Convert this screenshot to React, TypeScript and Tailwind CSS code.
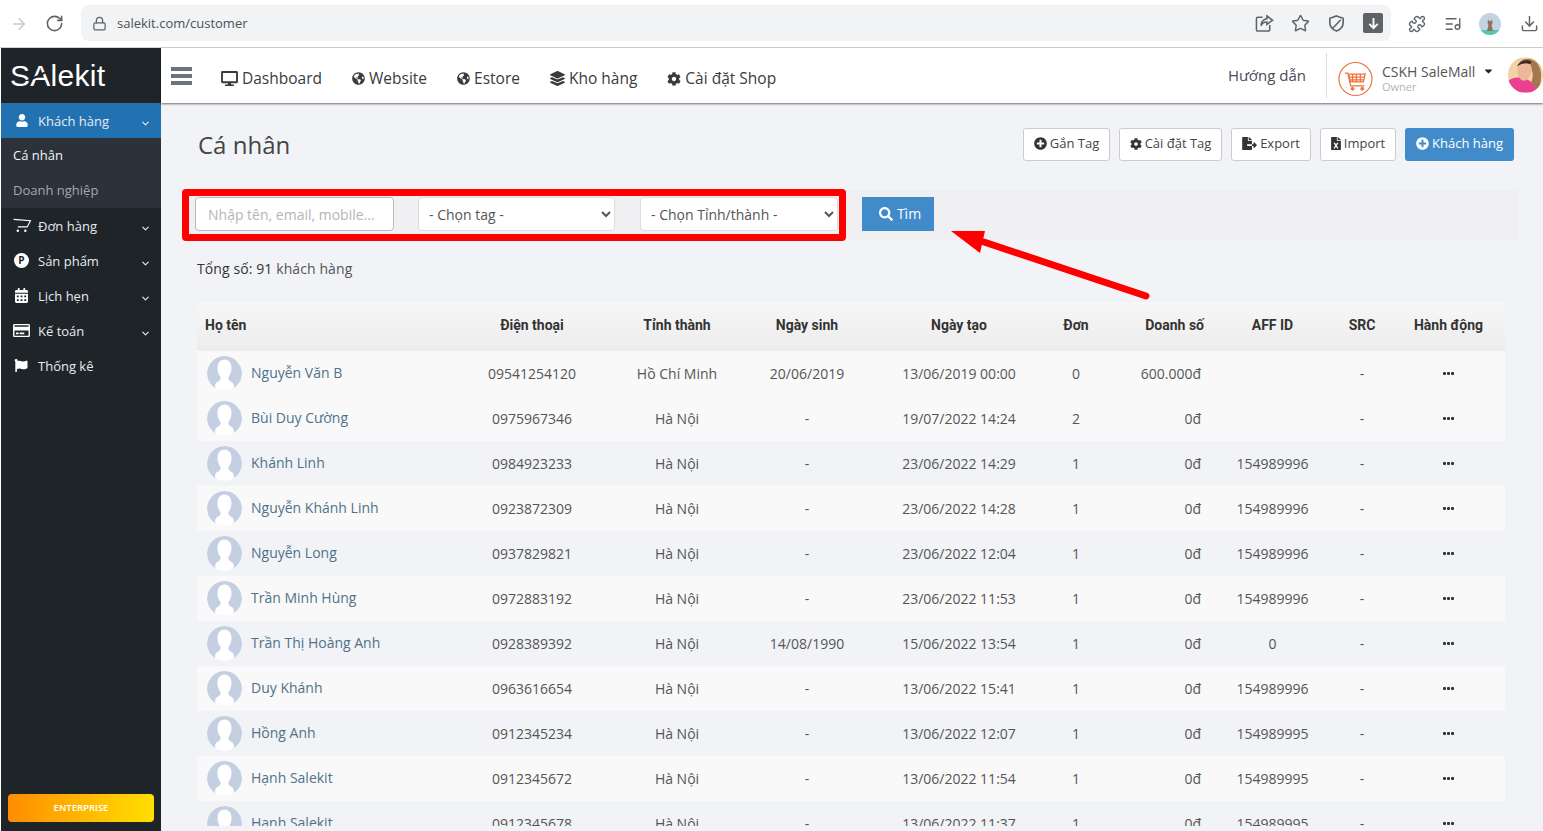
import { ArrowRight, ChevronDown, Download, ListMusic, Lock, Puzzle, RotateCw, Star } from "lucide-react";
import {
  FaCalendarAlt,
  FaCaretDown,
  FaCog,
  FaDesktop,
  FaFileExcel,
  FaFileExport,
  FaFlag,
  FaGlobeAmericas,
  FaLayerGroup,
  FaPlusCircle,
  FaRegCreditCard,
  FaSearch,
  FaUser,
} from "react-icons/fa";

const rows = [
  ["Nguyễn Văn B", "09541254120", "Hồ Chí Minh", "20/06/2019", "13/06/2019 00:00", "0", "600.000đ", ""],
  ["Bùi Duy Cường", "0975967346", "Hà Nội", "-", "19/07/2022 14:24", "2", "0đ", ""],
  ["Khánh Linh", "0984923233", "Hà Nội", "-", "23/06/2022 14:29", "1", "0đ", "154989996"],
  ["Nguyễn Khánh Linh", "0923872309", "Hà Nội", "-", "23/06/2022 14:28", "1", "0đ", "154989996"],
  ["Nguyễn Long", "0937829821", "Hà Nội", "-", "23/06/2022 12:04", "1", "0đ", "154989996"],
  ["Trần Minh Hùng", "0972883192", "Hà Nội", "-", "23/06/2022 11:53", "1", "0đ", "154989996"],
  ["Trần Thị Hoàng Anh", "0928389392", "Hà Nội", "14/08/1990", "15/06/2022 13:54", "1", "0đ", "0"],
  ["Duy Khánh", "0963616654", "Hà Nội", "-", "13/06/2022 15:41", "1", "0đ", "154989996"],
  ["Hồng Anh", "0912345234", "Hà Nội", "-", "13/06/2022 12:07", "1", "0đ", "154989995"],
  ["Hạnh Salekit", "0912345672", "Hà Nội", "-", "13/06/2022 11:54", "1", "0đ", "154989995"],
  ["Hạnh Salekit", "0912345678", "Hà Nội", "-", "13/06/2022 11:37", "1", "0đ", "154989995"],
];

const colClass = "grid grid-cols-[265px_140px_150px_110px_194px_40px_117px_119px_60px_113px] items-center";

function CartLine() {
  return (
    <svg viewBox="0 0 20 16" className="w-[19px] h-[15px]" fill="none" stroke="#fff">
      <path d="M0.5 1.5 L18.5 3 L15 9.5 H5" strokeWidth="1.2" />
      <circle cx="5" cy="13.5" r="1.3" fill="#fff" stroke="none" />
      <circle cx="13" cy="13.5" r="1.3" fill="#fff" stroke="none" />
    </svg>
  );
}

function Avatar() {
  return (
    <svg viewBox="0 0 35 35" className="w-[35px] h-[35px] shrink-0 rounded-full">
      <circle cx="17.5" cy="17.5" r="17.5" fill="#c5cfe2" />
      <path
        d="M17.5 3.5c-4.6 0-7 3.6-7 8.4 0 3.6 1.2 7 3 9 .5 2-.4 3.6-2.2 4.6-1.4.8-2.6 1.6-3.1 3.2-.3 1 .2 3 .6 6.8h17.4c.4-3.8.9-5.8.6-6.8-.5-1.6-1.7-2.4-3.1-3.2-1.8-1-2.7-2.6-2.2-4.6 1.8-2 3-5.4 3-9 0-4.8-2.4-8.4-7-8.4z"
        fill="#fff"
      />
    </svg>
  );
}

function SideItem({ icon, label, arrow = true }: { icon: React.ReactNode; label: string; arrow?: boolean }) {
  return (
    <div className="h-[35px] flex items-center text-[13px] text-[#e8ebee]">
      <span className="w-[37px] pl-[12px] flex items-center shrink-0">{icon}</span>
      <span className="flex-1 pt-[2px]">{label}</span>
      {arrow && <ChevronDown className="w-[11px] h-[11px] mr-[10px] mt-[6px]" strokeWidth={2.5} />}
    </div>
  );
}

function NavItem({ icon, label }: { icon: React.ReactNode; label: string }) {
  return (
    <div className="flex items-center gap-[4px] text-[15.5px] font-medium text-[#3b3b3b]">
      {icon}
      <span>{label}</span>
    </div>
  );
}

function ActionBtn({ icon, label, width }: { icon: React.ReactNode; label: string; width: string }) {
  return (
    <button className={`${width} h-[33px] pb-[2px] flex items-center justify-center gap-[3px] bg-white border border-[#ccc] rounded-[3px] text-[13px] text-[#444]`}>
      {icon}
      {label}
    </button>
  );
}

export default function App() {
  return (
    <div className="w-[1543px] h-[831px] overflow-hidden flex flex-col bg-white font-['Open_Sans',sans-serif]">
      {/* browser bar */}
      <div className="h-[48px] shrink-0 flex items-center border-b border-[#d4d4d4] bg-white">
        <ArrowRight className="w-[18px] h-[18px] ml-[10px] text-[#c4c7cb]" strokeWidth={2} />
        <RotateCw className="w-[19px] h-[19px] ml-[17px] text-[#5f6368]" strokeWidth={2} />
        <div className="ml-[17px] w-[1310px] h-[36px] -mt-[1px] rounded-lg bg-[#f1f3f4] flex items-center pl-[11px] pr-[8px]">
          <Lock className="w-[15px] h-[15px] text-[#5f6368]" strokeWidth={2} />
          <span className="ml-[10px] pt-[2px] text-[13px] text-[#4d5156]">salekit.com/customer</span>
          <div className="ml-auto flex items-center gap-[17px] text-[#5f6368]">
            <svg viewBox="0 0 20 20" className="w-[19px] h-[19px]" fill="none" stroke="currentColor" strokeWidth="1.6">
              <path d="M15.5 11.5v5a1.5 1.5 0 0 1-1.5 1.5H3a1.5 1.5 0 0 1-1.500-1.500V5A1.5 1.5 0 0 1 3 3.500h5" />
              <path d="M12.500 2l6 4.500-6 4.500V8.500c-3 0-5 1-6 4 0-4.500 2.500-7 6-7.500z" />
            </svg>
            <Star className="w-[19px] h-[19px]" strokeWidth={1.8} />
            <svg viewBox="0 0 20 20" className="w-[19px] h-[19px]" fill="none" stroke="currentColor" strokeWidth="1.7">
              <path d="M10 2l7 2.500v5c0 4-3 7-7 8.500-4-1.500-7-4.500-7-8.500v-5z" />
              <path d="M14.500 6L6 15" />
            </svg>
            <span className="w-[20px] h-[20px] rounded-[2px] bg-[#5f6368] flex items-center justify-center">
              <svg viewBox="0 0 14 14" className="w-[13px] h-[13px]" fill="none" stroke="#fff" strokeWidth="2">
                <path d="M7 1v11M2.500 7.500L7 12l4.500-4.500" />
              </svg>
            </span>
          </div>
        </div>
        <div className="ml-[17px] flex items-center text-[#5f6368]">
          <Puzzle className="w-[18px] h-[18px]" strokeWidth={1.8} />
          <ListMusic className="w-[18px] h-[18px] ml-[18px]" strokeWidth={1.8} />
          <svg viewBox="0 0 22 22" className="w-[22px] h-[22px] ml-[17px] rounded-full">
            <rect width="22" height="22" fill="#c3d3e4" />
            <rect y="17" width="22" height="5" fill="#52c9b0" />
            <path d="M9 6l1 2h2l1-2 .5 4-1 2 1.500 6H8l1.500-6-1-2z" fill="#8d7358" />
          </svg>
          <Download className="w-[19px] h-[19px] ml-[19px]" strokeWidth={1.8} />
        </div>
      </div>

      <div className="flex-1 flex min-h-0">
        {/* sidebar */}
        <aside className="ml-px w-[160px] shrink-0 bg-[#1f2429] flex flex-col">
          <div className="h-[55px] pl-[9px] flex items-center">
            <div className="relative font-['Liberation_Sans',sans-serif] text-[30px] text-white leading-none tracking-[0.3px]">
              SAlekit
              <svg viewBox="0 0 30 14" className="absolute left-[14px] top-[6px] w-[30px] h-[14px]">
                <path d="M0 14 C8 11 18 6 30 0 C20 8 12 12 4 14z" fill="#1f2429" />
              </svg>
            </div>
          </div>
          <div className="h-[35px] bg-[#2271b1]">
            <SideItem icon={<FaUser className="w-[12px] h-[13px] ml-[3px] text-white" />} label="Khách hàng" />
          </div>
          <div className="bg-[#2b323a] text-[13px]">
            <div className="h-[35px] pl-[12px] flex items-center text-[#f2f4f5]">Cá nhân</div>
            <div className="h-[35px] pl-[12px] flex items-center text-[#a1a9b0]">Doanh nghiệp</div>
          </div>
          <SideItem icon={<CartLine />} label="Đơn hàng" />
          <SideItem
            icon={
              <span className="ml-[1px] w-[15px] h-[15px] rounded-full bg-white text-[#1f2429] text-[10px] font-bold flex items-center justify-center">
                P
              </span>
            }
            label="Sản phẩm"
          />
          <SideItem icon={<FaCalendarAlt className="ml-[2px] w-[13px] h-[15px] text-white" />} label="Lịch hẹn" />
          <SideItem icon={<FaRegCreditCard className="w-[17px] h-[15px] text-white" />} label="Kế toán" />
          <SideItem icon={<FaFlag className="w-[16px] h-[13px] text-white" />} label="Thống kê" arrow={false} />
          <button className="mt-auto mb-[9px] mx-[7px] h-[28px] rounded-[4px] bg-gradient-to-r from-[#ff8c00] to-[#ffdf00] text-[9.5px] font-semibold text-white">
            ENTERPRISE
          </button>
        </aside>

        <div className="flex-1 min-w-0 flex flex-col bg-[#f1f3f6]">
          {/* top nav */}
          <header className="h-[55px] shrink-0 bg-white shadow-[0_1px_2px_rgba(0,0,0,0.55)] flex items-center relative z-10">
            <div className="ml-[10px] w-[21px] flex flex-col gap-[3px]">
              <span className="h-[4px] bg-[#6b7280]" />
              <span className="h-[4px] bg-[#6b7280]" />
              <span className="h-[4px] bg-[#6b7280]" />
            </div>
            <nav className="ml-[29px] pt-[6px] flex items-center gap-[30px]">
              <NavItem icon={<FaDesktop className="w-[17px] h-[15px]" />} label="Dashboard" />
              <NavItem icon={<FaGlobeAmericas className="w-[13px] h-[13px]" />} label="Website" />
              <NavItem icon={<FaGlobeAmericas className="w-[13px] h-[13px]" />} label="Estore" />
              <NavItem icon={<FaLayerGroup className="w-[15px] h-[15px]" />} label="Kho hàng" />
              <NavItem icon={<FaCog className="w-[14px] h-[14px]" />} label="Cài đặt Shop" />
            </nav>
            <div className="ml-auto flex items-center h-full">
              <span className="text-[15px] text-[#4a4a5a]">Hướng dẫn</span>
              <div className="ml-[20px] w-px h-[45px] bg-[#ddd]" />
              <svg viewBox="0 0 36 36" className="ml-[11px] w-[35px] h-[36px] mt-[6px]" fill="none" stroke="#f0723a">
                <circle cx="18" cy="18" r="17" strokeWidth="1.2" />
                <path d="M7 12h3l3 13h14" strokeWidth="1.2" />
                <path d="M11 13h17l-2 8H13zM11 16h16M12 19h15M15 13v8M19 13v8M23 13v8" strokeWidth="1.3" />
                <circle cx="15" cy="28" r="1.500" fill="#f0723a" />
                <circle cx="25" cy="28" r="1.500" fill="#f0723a" />
              </svg>
              <div className="ml-[9px] w-[102px] flex flex-col mt-[5px]">
                <div className="flex items-center whitespace-nowrap text-[14px] leading-[18px] text-[#555]">
                  CSKH SaleMall
                  <FaCaretDown className="ml-[8px] -mt-[3px] w-[11px] h-[12px] text-[#222] shrink-0" />
                </div>
                <span className="text-[11px] leading-[12px] text-[#b5b5b5]">Owner</span>
              </div>
              <svg viewBox="0 0 36 36" className="ml-[24px] w-[35px] h-[36px] -mt-[2px] rounded-full shrink-0">
                <rect width="36" height="36" fill="#f4d2a8" />
                <path d="M0 36V24c5-3 9-4 14-3 6 1 12 3 18 15z" fill="#ec3f92" />
                <path d="M10 9c2-7 9-9 14-7 7 2 10 9 10 16 0 7-1 12-4 16l-6-9c2-5 2-9 0-13-4 1-10 0-14-3z" fill="#a2784f" />
                <path d="M10 9c3-3 8-4 13-2 2 3 2 8 0 11-2 4-5 6-7 6-4-1-7-6-6-15z" fill="#eeb79a" />
                <path d="M9 9c3-5 9-8 15-5l-1 3c-4-2-9-1-14 2z" fill="#3a2a25" />
              </svg>
            </div>
          </header>

          <main className="flex-1 min-h-0 pt-[25px] relative">
            <div className="h-[33px] flex items-center pl-[37px] pr-[29px]">
              <h1 className="text-[24px] font-medium text-[#444]">Cá nhân</h1>
              <div className="ml-auto flex items-center gap-[9px]">
                <ActionBtn width="w-[87px]" icon={<FaPlusCircle className="w-[13px] h-[13px] text-[#333]" />} label="Gắn Tag" />
                <ActionBtn width="w-[103px]" icon={<FaCog className="w-[12px] h-[12px] text-[#333]" />} label="Cài đặt Tag" />
                <ActionBtn width="w-[80px]" icon={<FaFileExport className="w-[15px] h-[13px] text-[#333]" />} label="Export" />
                <ActionBtn width="w-[76px]" icon={<FaFileExcel className="w-[10px] h-[13px] text-[#333]" />} label="Import" />
                <button className="w-[109px] h-[33px] pb-[2px] flex items-center justify-center gap-[3px] rounded-[3px] bg-[#428bca] text-[13px] text-white">
                  <FaPlusCircle className="w-[13px] h-[13px]" />
                  Khách hàng
                </button>
              </div>
            </div>

            {/* filter */}
            <div className="relative mt-[29px] ml-[21px] mr-[25px] h-[50px] pb-[2px] bg-[#f0f0f2] flex items-center pl-[13px]">
              <input
                placeholder="Nhập tên, email, mobile..."
                className="w-[199px] h-[34px] px-[12px] bg-white border border-[#bbb] rounded-[4px] text-[14px] placeholder:text-[#b5b5b5]"
              />
              <select className="ml-[24px] w-[197px] h-[34px] pl-[6px] bg-white border border-[#ddd] rounded-[4px] text-[14px] text-[#555]">
                <option>- Chọn tag -</option>
              </select>
              <select className="ml-[25px] w-[198px] h-[34px] pl-[6px] bg-white border border-[#ddd] rounded-[4px] text-[14px] text-[#555]">
                <option>- Chọn Tỉnh/thành -</option>
              </select>
              <button className="ml-[24px] w-[72px] h-[34px] pl-[4px] pb-[1px] flex items-center justify-center gap-[4px] bg-[#428bca] text-[14px] text-white">
                <FaSearch className="w-[14px] h-[14px]" />
                Tìm
              </button>
              <div className="absolute left-0 -top-[1px] w-[664px] h-[52px] border-[7px] border-[#ff0000] rounded-[4px] pointer-events-none" />
            </div>

            <div className="mt-[20px] ml-[36px] text-[14px] leading-[18px] tracking-[0.007em] text-[#555]">
              <span className="text-[#333]">Tổng số: 91</span> khách hàng
            </div>

            {/* table */}
            <div className="mt-[24px] ml-[36px] w-[1308px] h-[524px] overflow-hidden">
              <div className={`${colClass} h-[49px] pb-[2px] bg-gradient-to-b from-[#f7f7f7] to-[#ececec] font-['Roboto',sans-serif] text-[14px] font-bold text-[#333] text-center`}>
                <div className="text-left pl-[8px]">Họ tên</div>
                <div>Điện thoại</div>
                <div>Tỉnh thành</div>
                <div>Ngày sinh</div>
                <div>Ngày tạo</div>
                <div>Đơn</div>
                <div className="text-right pr-[9px]">Doanh số</div>
                <div>AFF ID</div>
                <div>SRC</div>
                <div>Hành động</div>
              </div>
              {rows.map((r, i) => (
                <div key={i} className={`${colClass} h-[45px] text-[14px] text-[#555] text-center ${i % 2 === 1 || i === 0 ? "bg-[#f9f9f9]" : ""}`}>
                  <div className="flex items-center gap-[9px] pl-[10px] text-left text-[#4f7289]">
                    <Avatar />
                    <span className="-mt-[3px]">{r[0]}</span>
                  </div>
                  <div>{r[1]}</div>
                  <div>{r[2]}</div>
                  <div>{r[3]}</div>
                  <div>{r[4]}</div>
                  <div>{r[5]}</div>
                  <div className="text-right pr-[12px]">{r[6]}</div>
                  <div>{r[7]}</div>
                  <div>-</div>
                  <div className="flex justify-center gap-px">
                    <span className="w-[3px] h-[3px] rounded-[1px] bg-[#333]" />
                    <span className="w-[3px] h-[3px] rounded-[1px] bg-[#333]" />
                    <span className="w-[3px] h-[3px] rounded-[1px] bg-[#333]" />
                  </div>
                </div>
              ))}
            </div>

            {/* annotation arrow */}
            <svg className="absolute left-[779px] top-[114px] w-[210px] h-[90px] pointer-events-none" viewBox="0 0 210 90">
              <path d="M44 25 L206 79" stroke="#ff0000" strokeWidth="7" strokeLinecap="round" />
              <path d="M11 14 L45 14 L40 36z" fill="#ff0000" />
            </svg>
          </main>
        </div>
      </div>
    </div>
  );
}
